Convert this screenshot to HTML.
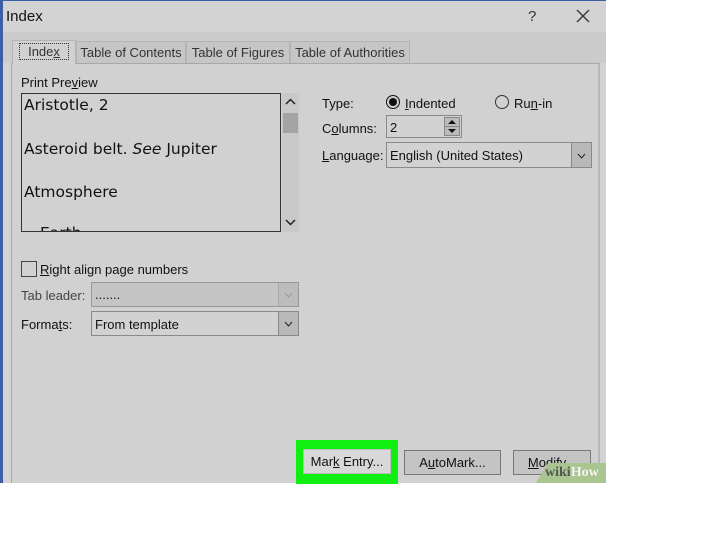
<!DOCTYPE html>
<html><head><style>
body{margin:0;width:728px;height:546px;background:#fff;position:relative;overflow:hidden;font-family:"Liberation Sans",sans-serif;font-size:13px;color:#111}
.a{position:absolute}
.dlg{left:0;top:0;width:606px;height:483px;background:#d3d3d3;border-left:3px solid #3b5ea6;box-sizing:border-box;border-top:1px solid #3b5ea6}
.panel{left:11px;top:63px;width:589px;height:420px;background:#d1d1d1;border-left:1px solid #a8a8a8;border-top:1px solid #a8a8a8;border-right:2px solid #b8b8b8;box-sizing:border-box}
.tab{top:41px;height:22px;background:#c6c6c6;border:1px solid #b4b4b4;border-bottom:none;box-sizing:border-box;text-align:center;line-height:21px;color:#333}
.box{background:#d2d2d2;border:1px solid #8a8a8a;box-sizing:border-box}
.dd{width:19px;border-left:1px solid #888;background:#b9b9b9;top:0;bottom:0;right:0}
.btn{height:25px;top:450px;background:#c4c4c4;border:1px solid #777;box-sizing:border-box;text-align:center;line-height:23px}
u{text-decoration:underline}
</style></head><body>
<div class="a dlg"></div>
<div class="a" style="left:6px;top:8px;font-size:15px">Index</div>
<div class="a" style="left:528px;top:8px;font-size:15px;color:#333">?</div>
<svg class="a" style="left:576px;top:9px" width="14" height="14"><path d="M1 1L13 13M13 1L1 13" stroke="#333" stroke-width="1.3"/></svg>
<div class="a" style="left:3px;top:32px;width:603px;height:31px;background:#cbcbcb"></div>
<div class="a panel"></div>
<div class="a tab" style="left:12px;width:64px;top:40px;height:24px;background:#d1d1d1"><span style="border:1px dotted #333;padding:0 8px">Inde<u>x</u></span></div>
<div class="a tab" style="left:76px;width:110px">Table of Contents</div>
<div class="a tab" style="left:186px;width:104px">Table of Figures</div>
<div class="a tab" style="left:290px;width:120px">Table of Authorities</div>
<div class="a" style="left:21px;top:75px">Print Pre<u>v</u>iew</div>
<div class="a" style="left:21px;top:93px;width:260px;height:139px;border:1px solid #333;box-sizing:border-box;overflow:hidden;font-size:15.5px;font-family:'DejaVu Sans',sans-serif">
<div class="a" style="left:2px;top:2px">Aristotle, 2</div>
<div class="a" style="left:2px;top:46px">Asteroid belt. <i>See</i> Jupiter</div>
<div class="a" style="left:2px;top:89px">Atmosphere</div>
<div class="a" style="left:18px;top:130px">Earth</div>
</div>
<div class="a" style="left:282px;top:93px;width:17px;height:139px;background:#c9c9c9"></div>
<div class="a" style="left:283px;top:113px;width:15px;height:20px;background:#a4a4a4"></div>
<svg class="a" style="left:285px;top:98px" width="11" height="8"><path d="M1 6L5.5 1.5L10 6" stroke="#222" stroke-width="1.5" fill="none"/></svg>
<svg class="a" style="left:285px;top:218px" width="11" height="8"><path d="M1 2L5.5 6.5L10 2" stroke="#222" stroke-width="1.5" fill="none"/></svg>
<div class="a" style="left:21px;top:261px;width:14px;height:14px;border:1px solid #444"></div>
<div class="a" style="left:40px;top:262px"><u>R</u>ight align page numbers</div>
<div class="a" style="left:21px;top:288px;color:#444">Tab leader:</div>
<div class="a box" style="left:91px;top:282px;width:208px;height:25px;background:#c5c5c5;border-color:#999"><span class="a" style="left:3px;top:4px">.......</span><div class="a dd" style="border-color:#aaa;background:#bcbcbc"></div><svg class="a" style="right:5px;top:9px" width="9" height="6"><path d="M1 1L4.5 5L8 1" stroke="#999" fill="none"/></svg></div>
<div class="a" style="left:21px;top:317px">Forma<u>t</u>s:</div>
<div class="a box" style="left:91px;top:311px;width:208px;height:25px"><span class="a" style="left:3px;top:5px">From template</span><div class="a dd"></div><svg class="a" style="right:5px;top:9px" width="9" height="6"><path d="M1 1L4.5 5L8 1" stroke="#222" fill="none"/></svg></div>
<div class="a" style="left:322px;top:96px">Type:</div>
<div class="a" style="left:386px;top:95px;width:12px;height:12px;border:1px solid #111;border-radius:50%"><div class="a" style="left:2px;top:2px;width:8px;height:8px;background:#111;border-radius:50%"></div></div>
<div class="a" style="left:405px;top:96px"><u>I</u>ndented</div>
<div class="a" style="left:495px;top:95px;width:12px;height:12px;border:1px solid #333;border-radius:50%"></div>
<div class="a" style="left:514px;top:96px">Ru<u>n</u>-in</div>
<div class="a" style="left:322px;top:121px">C<u>o</u>lumns:</div>
<div class="a box" style="left:386px;top:115px;width:76px;height:23px"><span class="a" style="left:3px;top:4px">2</span>
<svg class="a" style="left:57px;top:1px" width="16" height="19"><rect x="0.5" y="0.5" width="15" height="18" fill="#bbb" stroke="#888"/><line x1="0" y1="9.5" x2="16" y2="9.5" stroke="#888"/><path d="M4 7L8 3L12 7Z M4 12L8 16L12 12Z" fill="#111"/></svg></div>
<div class="a" style="left:322px;top:148px"><u>L</u>anguage:</div>
<div class="a box" style="left:386px;top:142px;width:206px;height:26px"><span class="a" style="left:3px;top:5px">English (United States)</span><div class="a dd"></div><svg class="a" style="right:5px;top:10px" width="9" height="6"><path d="M1 1L4.5 5L8 1" stroke="#222" fill="none"/></svg></div>
<div class="a" style="left:296px;top:440px;width:102px;height:44px;background:#11ee11"></div>
<div class="a btn" style="left:303px;top:449px;width:88px;background:#d8d8d8;border-color:#bbb">Mar<u>k</u> Entry...</div>
<div class="a btn" style="left:404px;width:97px">A<u>u</u>toMark...</div>
<div class="a btn" style="left:513px;width:78px"><u>M</u>odify...</div>
<div class="a" style="left:536px;top:463px;width:70px;height:20px;background:#a9c590;clip-path:polygon(12px 0,100% 0,100% 100%,0 100%)"></div>
<div class="a" style="left:545px;top:465px;font-family:'Liberation Serif',serif;font-weight:bold;font-size:14px;color:#555">wiki<span style="color:#f4f4f4">How</span></div>
</body></html>
